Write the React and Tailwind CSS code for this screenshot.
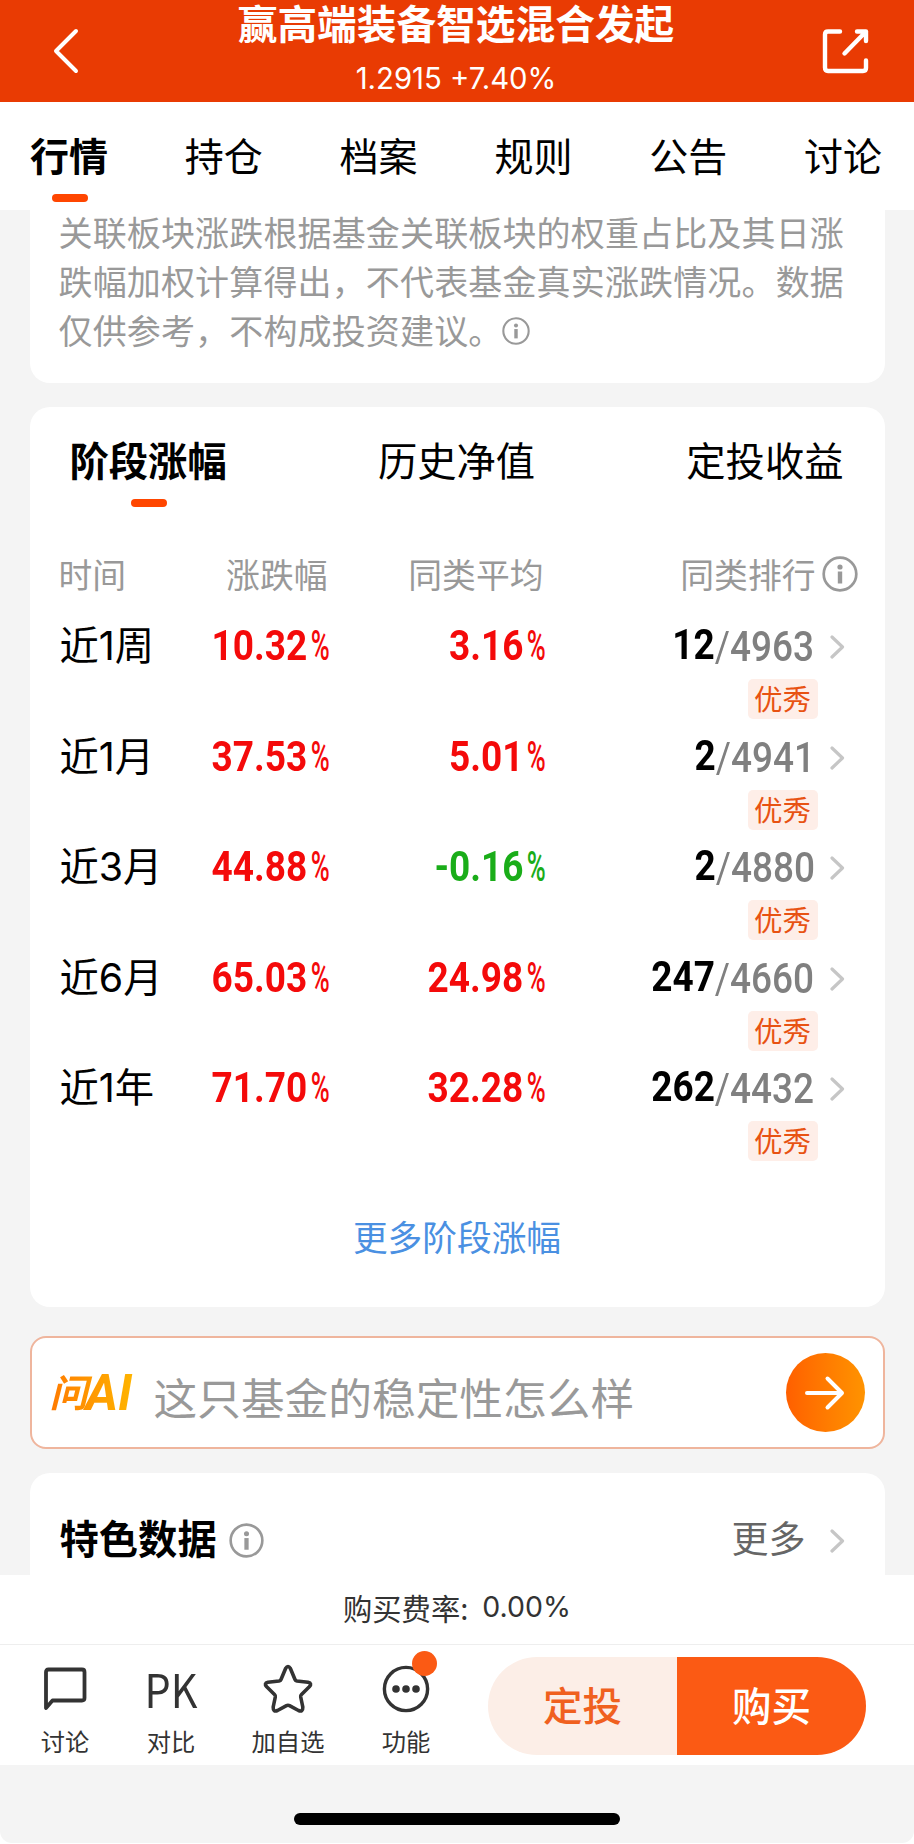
import React, { useState } from 'react';

const tabs = ['行情', '持仓', '档案', '规则', '公告', '讨论'];
const periodTabs = ['阶段涨幅', '历史净值', '定投收益'];

const rows = [
  { period: '近1周', change: '10.32', average: '3.16', rank: '12', total: '4963' },
  { period: '近1月', change: '37.53', average: '5.01', rank: '2', total: '4941' },
  { period: '近3月', change: '44.88', average: '-0.16', rank: '2', total: '4880' },
  { period: '近6月', change: '65.03', average: '24.98', rank: '247', total: '4660' },
  { period: '近1年', change: '71.70', average: '32.28', rank: '262', total: '4432' },
];

function InfoIcon({ className }) {
  return (
    <svg className={className} viewBox="0 0 36 36" fill="none">
      <circle cx="18" cy="18" r="16.3" stroke="currentColor" strokeWidth="2.7" />
      <circle cx="18" cy="11" r="2.6" fill="currentColor" />
      <path d="M18 15.5V27.5" stroke="currentColor" strokeWidth="4.4" />
    </svg>
  );
}

function Chevron() {
  return (
    <svg className="w-4 h-6 text-[#c6c6c6]" viewBox="0 0 16 24" fill="none">
      <path d="M2 2L12.5 12L2 22" stroke="currentColor" strokeWidth="3.2" strokeLinecap="round" strokeLinejoin="round" />
    </svg>
  );
}

function Percent({ value }) {
  const color = value.startsWith('-') ? 'text-[#1aad19]' : 'text-[#f40a0a]';
  return (
    <div className={`flex justify-end items-baseline font-[Roboto,sans-serif] text-[43px] leading-[44px] ${color}`}>
      <span className="font-bold origin-right scale-x-[.86]">{value}</span>
      <span className="w-[20px] flex justify-end">
        <span className="font-medium origin-right scale-x-[.6] translate-x-[2px]">%</span>
      </span>
    </div>
  );
}

function Header() {
  return (
    <header className="h-[102px] shrink-0 bg-[#e93b03] text-white flex justify-between px-[44px]">
      <svg className="w-11 h-[50px] mt-[26px]" viewBox="0 0 44 50" fill="none">
        <path d="M32 5L12 25L32 45" stroke="currentColor" strokeWidth="4" strokeLinecap="round" strokeLinejoin="round" />
      </svg>
      <div className="flex flex-col items-center pl-[4px]">
        <h1 className="text-[39.7px] leading-[44px] font-bold whitespace-nowrap">赢高端装备智选混合发起</h1>
        <p className="mt-[17px] text-[29.3px] leading-9 font-[Inter,sans-serif]">1.2915 +7.40%</p>
      </div>
      <svg className="w-[50px] h-[50px] mt-[26px]" viewBox="0 0 50 50" fill="none">
        <path d="M20 5.5H8Q5 5.5 5 8.5V41.5Q5 45 8 45H43Q46 45 46 42V34.5M37 5.5H46V15M46 5.5L24.5 27.5" stroke="currentColor" strokeWidth="4.4" strokeLinecap="round" strokeLinejoin="round" />
      </svg>
    </header>
  );
}

function Stages() {
  const [active, setActive] = useState(0);

  return (
    <section className="mt-6 h-[900px] shrink-0 bg-white rounded-[20px] pt-[28px] flex flex-col">
      <div className="flex justify-between pl-10 pr-[41px]">
        {periodTabs.map((tab, i) => (
          <button key={tab} onClick={() => setActive(i)} className="flex flex-col items-center">
            <span className={`text-[39.3px] leading-[48px] ${active === i ? 'font-bold' : ''}`}>{tab}</span>
            <span className={`mt-[16px] ml-[2px] w-9 h-2 rounded-full ${active === i ? 'bg-[#ff4600]' : ''}`} />
          </button>
        ))}
      </div>

      <div className="mt-[47px] h-10 grid grid-cols-[269px_216px_1fr] items-center pl-[29px] pr-[27px] text-[33.8px] leading-10 text-[#999]">
        <div className="flex justify-between">
          <span>时间</span>
          <span>涨跌幅</span>
        </div>
        <span className="text-right">同类平均</span>
        <span className="flex justify-end items-center gap-[6px]">
          同类排行
          <InfoIcon className="w-9 h-9" />
        </span>
      </div>

      {rows.map(row => (
        <div key={row.period} className="h-[110.5px] pt-[29px] grid grid-cols-[269px_216px_1fr] pl-[29px] pr-[39px]">
          <div className="flex justify-between">
            <span className="ml-px mt-px text-[39.3px] leading-[44px] font-[Inter,'Noto_Sans_CJK_SC',sans-serif]">{row.period}</span>
            <Percent value={row.change} />
          </div>
          <Percent value={row.average} />
          <div>
            <div className="flex justify-end items-center">
              <div className="flex items-baseline origin-right scale-x-[.88] font-[Roboto,sans-serif] text-[42px] leading-[44px]">
                <span className="font-bold">{row.rank}</span>
                <span className="relative top-0.5 text-[#808080]">/</span>
                <span className="relative top-0.5 font-medium text-[#808080]">{row.total}</span>
              </div>
              <span className="ml-[15px] mt-1"><Chevron /></span>
            </div>
            <div className="mt-[12px] mr-[28px] flex justify-end">
              <span className="w-[70px] h-10 rounded-[5px] bg-[#feeee8] text-[#e85212] text-[28.5px] leading-[38px] text-center">优秀</span>
            </div>
          </div>
        </div>
      ))}

      <a className="mt-[69px] text-center text-[34.7px] leading-10 text-[#4a90e2]">更多阶段涨幅</a>
    </section>
  );
}

function AskAI() {
  return (
    <section className="mt-[29px] h-[113px] shrink-0 bg-white border-2 border-[#efb59d] rounded-2xl flex items-center pl-[18px] pr-[18px]">
      <span className="w-[89px] h-[52px] flex items-center text-transparent bg-clip-text bg-linear-to-r from-[#ff7a00] to-[#ffb800] font-bold italic whitespace-nowrap">
        <span className="text-[38px] leading-[48px] -mt-[4px]">问</span>
        <span className="-ml-[2px] font-[Roboto,sans-serif] text-[50px] leading-[52px]">AI</span>
      </span>
      <span className="ml-[15px] text-[43.7px] leading-[52px] text-[#999] grow pt-[7px]">这只基金的稳定性怎么样</span>
      <button className="w-[79px] h-[79px] rounded-full bg-linear-to-r from-[#ff5f00] to-[#ff9300] flex items-center justify-center">
        <svg className="w-10 h-10" viewBox="0 0 40 40" fill="none">
          <path d="M2 20H37M22.5 5.5L37 20L22.5 34.5" stroke="white" strokeWidth="4" strokeLinecap="round" strokeLinejoin="round" />
        </svg>
      </button>
    </section>
  );
}

function ActionItem({ label, className, children }) {
  return (
    <button className={`flex flex-col items-center text-[#333] ${className}`}>
      <span className="relative h-[60px] flex items-center justify-center">{children}</span>
      <span className="mt-[6px] text-[24.3px] leading-8">{label}</span>
    </button>
  );
}

function BottomBar() {
  return (
    <footer className="shrink-0 h-[190px] bg-white">
      <div className="h-[70px] pb-1 border-b-[1.5px] border-[#eee] flex items-center justify-center gap-3.5 text-[#333] text-[29.3px]">
        <span>购买费率:</span>
        <span className="font-[Inter,sans-serif] text-[28.5px]">0.00%</span>
      </div>
      <div className="h-[120px] flex pt-[14px]">
        <ActionItem label="讨论" className="w-[106px] ml-[12px]">
          <svg className="w-[44px] h-[46px]" viewBox="0 0 44 46" fill="none">
            <path d="M3 42V6Q3 3.5 5.5 3.5H39Q41.5 3.5 41.5 6V32Q41.5 34.5 39 34.5H9.5Z" stroke="currentColor" strokeWidth="3.8" strokeLinejoin="round" />
          </svg>
        </ActionItem>
        <ActionItem label="对比" className="w-[106px]">
          <span className="-mt-[3px] text-[47px] leading-[60px] scale-x-[.88]">PK</span>
        </ActionItem>
        <ActionItem label="加自选" className="w-[128px]">
          <svg className="w-[50px] h-[50px]" viewBox="0 0 50 50" fill="none">
            <path d="M22.6 4.5Q25 .5 27.4 4.5L32 15.5Q32.5 16.7 34 17L45 18.3Q49.5 19.3 46.3 22.8L38.5 30.5Q37.5 31.5 37.7 33L39.8 43Q40 48.3 35.5 46.5L26.5 41.6Q25 40.8 23.5 41.6L14.5 46.5Q10 48.3 10.2 43L12.3 33Q12.5 31.5 11.5 30.5L3.7 22.8Q.5 19.3 5 18.3L16 17Q17.5 16.7 18 15.5Z" stroke="currentColor" strokeWidth="3.6" strokeLinejoin="round" />
          </svg>
        </ActionItem>
        <ActionItem label="功能" className="w-[108px]">
          <svg className="w-12 h-12" viewBox="0 0 48 48" fill="none">
            <circle cx="24" cy="24" r="21.6" stroke="currentColor" strokeWidth="3.4" />
            <circle cx="14" cy="24" r="3.8" fill="currentColor" />
            <circle cx="24" cy="24" r="3.8" fill="currentColor" />
            <circle cx="34" cy="24" r="3.8" fill="currentColor" />
          </svg>
          <span className="absolute -top-[8px] left-[30px] w-[25px] h-[25px] rounded-full bg-[#fb5a14]" />
        </ActionItem>
        <div className="ml-[28px] -mt-[2px] flex h-[98px] w-[378px] rounded-full overflow-hidden text-[39.5px] font-medium">
          <button className="w-1/2 pb-1 bg-[#fceee7] text-[#f0601f]">定投</button>
          <button className="w-1/2 pb-1 bg-[#fb5a14] text-white">购买</button>
        </div>
      </div>
    </footer>
  );
}

function App() {
  const [active, setActive] = useState(0);

  return (
    <div className="w-[914px] h-[1844px] overflow-hidden bg-[#f4f4f4] flex flex-col text-black font-['Noto_Sans_CJK_SC',sans-serif]">
      <Header />

      <nav className="h-[108px] shrink-0 bg-white flex justify-between items-start pl-[30px] pr-[32px] pt-[28px]">
        {tabs.map((tab, i) => (
          <button key={tab} onClick={() => setActive(i)} className="flex flex-col items-center">
            <span className={`text-[39px] leading-[48px] ${active === i ? 'font-bold' : ''}`}>{tab}</span>
            <span className={`mt-[16px] ml-[2px] w-9 h-2 rounded-full ${active === i ? 'bg-[#ff4600]' : ''}`} />
          </button>
        ))}
      </nav>

      <main className="h-[1365px] shrink-0 overflow-hidden flex flex-col px-[29.5px]">
        <section className="h-[173px] shrink-0 bg-white rounded-b-[20px] pl-[29px] text-[34px] leading-[49px] tracking-[.15px] text-[#999]">
          <p className="w-[792px] -mt-[3px]">
            关联板块涨跌根据基金关联板块的权重占比及其日涨跌幅加权计算得出，不代表基金真实涨跌情况。数据仅供参考，不构成投资建议。
            <InfoIcon className="inline w-[28px] h-[28px] -mt-[8px]" />
          </p>
        </section>

        <Stages />
        <AskAI />

        <section className="mt-6 h-[140px] shrink-0 bg-white rounded-t-[20px] flex justify-between items-start pt-[40px] pl-[30px] pr-[39px]">
          <div className="flex items-center">
            <h2 className="text-[39.3px] leading-[48px] font-bold">特色数据</h2>
            <InfoIcon className="ml-[12px] mt-[6px] w-[35px] h-[35px] text-[#999]" />
          </div>
          <div className="flex items-center text-[37px] leading-[48px] text-[#666]">
            更多
            <span className="ml-6 mt-[7px]"><Chevron /></span>
          </div>
        </section>
      </main>

      <BottomBar />

      <div className="grow bg-white">
        <div className="h-[78px] bg-[#f4f4f4] rounded-b-xl flex justify-center pt-[48px]">
          <div className="w-[326px] h-3 rounded-full bg-black" />
        </div>
      </div>
    </div>
  );
}

export default App;
